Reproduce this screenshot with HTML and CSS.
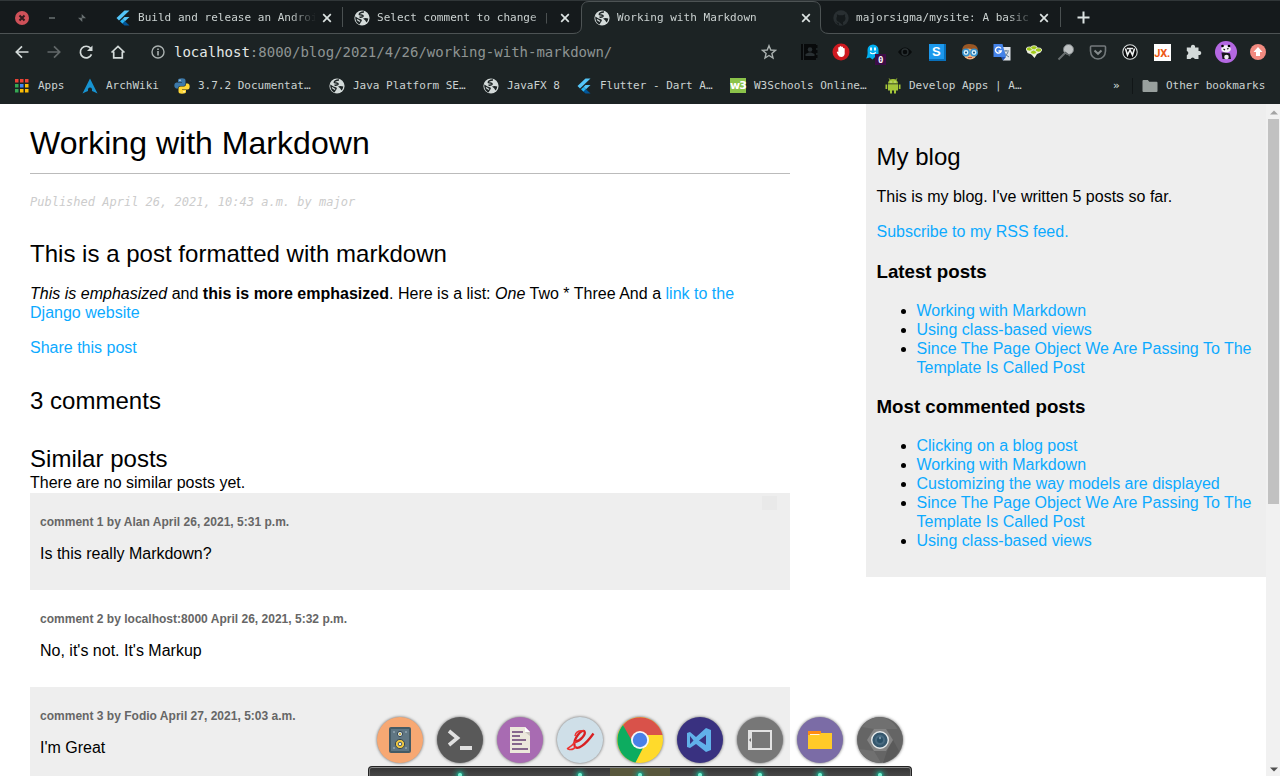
FILE: index.html
```html
<!DOCTYPE html>
<html lang="en">
<head>
<meta charset="utf-8">
<title>Working with Markdown</title>
<link rel="stylesheet" href="styles.css">
</head>
<body>
<svg class="defs" width="0" height="0">
  <defs>
    <symbol id="globe" viewBox="0 0 16 16"><circle cx="8" cy="8" r="7.6" fill="#d3dad9"/><path d="M10 2C7.500 1.800 4.500 3.500 5.500 4.700C7 5.500 9.500 4.500 9 6.300C8.500 7.300 6.500 7 5.500 7.300" fill="none" stroke="#1c2324" stroke-width="1.500"/><path d="M1.300 6.500L4.500 8.500L7.500 9.500Q8.500 10.500 7 12L5.500 14.500C3 13.500 1 10.500 1.300 6.500Z" fill="#1c2324"/><path d="M9 8.500Q11.500 7.500 14.300 8.500Q14 11 12.500 12.500Q11.500 10 9 8.500Z" fill="#1c2324"/><path d="M3 9.500L6 11.500" stroke="#d3dad9" stroke-width="1.300"/></symbol>
    <symbol id="flutter" viewBox="0 0 16 16"><path d="M9.500 .5H14.500L4 10.500L1.500 8Z" fill="#54c5f8"/><path d="M9.500 7H14.500L10 11.300L7.500 8.900Z" fill="#54c5f8"/><path d="M5 11.300L7.500 8.900L10 11.300L7.500 13.700Z" fill="#29b6f6"/><path d="M7.500 13.700L10 11.300L14.500 15.500H9.500Z" fill="#01579b"/></symbol>
    <symbol id="close" viewBox="0 0 10 10"><path d="M1.200 1.200L8.800 8.800M8.800 1.200L1.200 8.800" stroke="#dce3e2" stroke-width="1.700"/></symbol>
  </defs>
</svg>
<div class="screen">
  <header class="browser">
    <div class="tabstrip">
      <div class="window-buttons">
        <svg width="14" height="14" viewBox="0 0 14 14"><circle cx="7" cy="7" r="7" fill="#cf5159"/><path d="M4.500 4.500L9.500 9.500M9.500 4.500L4.500 9.500" stroke="#301a1d" stroke-width="2"/></svg>
        <svg width="14" height="14" viewBox="0 0 14 14"><path d="M4 7H10" stroke="#535a5b" stroke-width="2"/></svg>
        <svg width="14" height="14" viewBox="0 0 14 14"><path d="M6.700 3V7.300H11ZM3 6.700H7.300V11Z" fill="#697071"/></svg>
      </div>
      <div class="tab tab-first"><svg class="favicon"><use href="#flutter"/></svg><span class="tab-title">Build and release an Android app</span><svg class="tab-close"><use href="#close"/></svg></div>
      <div class="tab"><svg class="favicon"><use href="#globe"/></svg><span class="tab-title">Select comment to change | Django</span><svg class="tab-close"><use href="#close"/></svg></div>
      <div class="tab tab-active"><svg class="tab-outline" width="257" height="33" viewBox="0 0 257 33"><path d="M0 33V32.500Q8.500 32.500 8.500 25V8Q8.500 .5 16 .5H240Q247.500 .5 247.500 8V25Q247.500 32.500 256 32.500V33Z" fill="#1c2324"/><path d="M0 32.500Q8.500 32.500 8.500 25V8Q8.500 .5 16 .5H240Q247.500 .5 247.500 8V25Q247.500 32.500 256 32.500" fill="none" stroke="#4d5354"/></svg><svg class="favicon"><use href="#globe"/></svg><span class="tab-title">Working with Markdown</span><svg class="tab-close"><use href="#close"/></svg></div>
      <div class="tab tab-last"><svg class="favicon" viewBox="0 0 16 16"><circle cx="8" cy="8" r="7.700" fill="#292f32"/><path d="M5.800 15.500V12.800C3.500 13 3.500 11.500 2.500 11.200M6 12C3.500 11.500 3.300 9.800 3.500 7.800L4 6.500L3.900 4.300L6 5.200H10L12.100 4.300L12 6.500C13.200 9 12 11.500 10 12L10.200 15.500Z" fill="#151a1c"/></svg><span class="tab-title">majorsigma/mysite: A basic blog</span><svg class="tab-close"><use href="#close"/></svg></div>
      <svg class="new-tab" width="13" height="13" viewBox="0 0 13 13"><path d="M6.500 .5V12.500M.5 6.500H12.500" stroke="#dce3e2" stroke-width="2"/></svg>
    </div>
    <div class="toolbar">
      <div class="nav">
        <svg viewBox="0 0 16 16"><path d="M14.500 8H2.500M8 2.300L2.300 8L8 13.700" class="line bright"/></svg>
        <svg viewBox="0 0 16 16"><path d="M1.500 8H13.500M8 2.300L13.700 8L8 13.700" class="line dim"/></svg>
        <svg viewBox="0 0 16 16"><path d="M13.500 10.300A5.800 5.800 0 1 1 12.600 4.300" class="line bright"/><path d="M14.500 1.500V7H9Z" fill="#d3dad9"/></svg>
        <svg viewBox="0 0 16 16"><path d="M1.500 8.500L8 2.300L14.500 8.500M3.700 7.500V13.800H12.300V7.500" class="line bright"/></svg>
      </div>
      <div class="address">
        <svg width="14" height="14" viewBox="0 0 14 14"><circle cx="7" cy="7" r="6" fill="none" stroke="#aab1b0" stroke-width="1.400"/><path d="M7 6V10.500M7 3.400V5" stroke="#aab1b0" stroke-width="1.600"/></svg>
        <span class="url"><b>localhost</b>:8000/blog/2021/4/26/working-with-markdown/</span>
        <svg class="star" width="16" height="16" viewBox="0 0 16 16"><path d="M8 1.700L9.800 6L14.400 6.400L10.900 9.400L12 14L8 11.500L4 14L5.100 9.400L1.600 6.400L6.200 6Z" fill="none" stroke="#aab1b0" stroke-width="1.400"/></svg>
      </div>
      <div class="extensions">
        <svg viewBox="0 0 18 18"><path d="M1 1H16V17H1Z" fill="#080a0b"/><path d="M3.500 1V17" stroke="#24292b"/><circle cx="10" cy="6.500" r="2.300" fill="#293033"/><path d="M5.500 13V11L9 9.500H11L14.500 11V13Z" fill="#293033"/><path d="M16 2h1.500v3H16zM16 7h1.500v3H16zM16 12h1.500v3H16z" fill="#080a0b"/></svg>
        <svg viewBox="0 0 18 18"><circle cx="9" cy="9" r="8.500" fill="#cf1920"/><path d="M4.700 9L5.700 8.400L6.300 9.300V4.500Q7.100 3.500 7.700 4.500V3.500Q8.600 2.500 9.300 3.500V4Q10.200 3.100 11 4.200V5.200Q12 4.500 12.700 5.500V11Q12 14 9.300 14Q7 14 6 12Z" fill="#fff"/></svg>
        <div class="ghost"><svg viewBox="0 0 18 18"><path d="M3.500 7A5.500 5.500 0 0 1 14.500 7V15L11 14L8.500 16.500L6 14.500L2 15.500Q4 13 3.500 7Z" fill="#00aef0"/><path d="M7 4.500V7.500M11 4.500V7.500" stroke="#fff" stroke-width="1.800"/><path d="M6 9.500Q8.500 12 12 9.500" fill="none" stroke="#fff" stroke-width="1.100"/></svg><span class="ghost-count">0</span></div>
        <svg viewBox="0 0 18 18"><path d="M2 9Q9 0 16 9Q9 18 2 9Z" fill="#080b0c"/><circle cx="9" cy="9" r="3" fill="none" stroke="#293032" stroke-width="1.400"/></svg>
        <div class="letter-tile">S</div>
        <svg viewBox="0 0 18 18"><circle cx="9" cy="9.500" r="7" fill="#f0b47d"/><path d="M1.500 10C0 2 5 1 9 1Q17 1 17 8L16.500 11L14 6.500L7 5.500L4 7Z" fill="#9a5724"/><g fill="#d8f1fc" stroke="#3493d0" stroke-width="1.500"><circle cx="5" cy="9.500" r="3.200"/><circle cx="13" cy="9.500" r="3.200"/></g><circle cx="5" cy="9.500" r="1" fill="#144e78"/><circle cx="13" cy="9.500" r="1" fill="#144e78"/><path d="M7 14.500H11" stroke="#b64b3d"/></svg>
        <svg viewBox="0 0 18 18"><path d="M7 4H17.500V17.500H10Z" fill="#e0e5eb"/><path d="M10 8H16M13 7V8M11 9Q12 12 16 14M15 9Q14 12 11 14" fill="none" stroke="#617b91"/><path d="M.5 1H9.500L13 14H.5Z" fill="#4483e9"/><path d="M8 14H13L10 17.500Z" fill="#2455b5"/><path d="M8 5.500A3 3 0 1 0 8.300 8H5.500" fill="none" stroke="#fff" stroke-width="1.300"/></svg>
        <svg viewBox="0 0 18 18"><path d="M1 6L5 8L9 8L16.500 6L15.500 9.500L12 11L9.500 15L6.500 11.500L2.500 10Z" fill="#eef1df"/><g fill="#a1cb18" stroke="#f3f4e8" stroke-width=".8"><ellipse cx="4.500" cy="6" rx="3.200" ry="2.100"/><ellipse cx="9" cy="4.700" rx="3.200" ry="2"/><ellipse cx="13.500" cy="7" rx="3.200" ry="2.100"/><ellipse cx="8.500" cy="9.300" rx="3" ry="2"/></g></svg>
        <svg viewBox="0 0 18 18"><path d="M1.500 16.500L8 10" stroke="#686e70" stroke-width="2"/><circle cx="11.500" cy="6.500" r="5" fill="#bfc3c4" stroke="#777d7f"/><path d="M8 9L13 13" stroke="#596062" stroke-width="1.500"/></svg>
        <svg viewBox="0 0 18 18"><path d="M2.500 3H15.500Q16.500 3 16.500 4V8Q16 15.500 9 16Q2 15.500 1.500 8V4Q1.500 3 2.500 3Z" fill="none" stroke="#747a7c" stroke-width="1.600"/><path d="M5.500 7.500L9 10.800L12.500 7.500" fill="none" stroke="#858b8c" stroke-width="2"/></svg>
        <svg viewBox="0 0 18 18"><circle cx="9" cy="9" r="7.200" fill="#080a0b" stroke="#d8dddd" stroke-width="1.100"/><path d="M4.500 5.500L6.500 12L9 7L11.500 12L13.500 5.500M6 5.500H12" fill="none" stroke="#f0f3f3" stroke-width="1.600"/></svg>
        <div class="jx">JX.</div>
        <svg viewBox="0 0 18 18"><path d="M1.800 4.500H6A2.100 2.100 0 1 1 10 4.500H13.500V8A2.100 2.100 0 1 1 13.500 12V16H9.800A2.200 2.200 0 0 0 5.600 16H1.800V12.200A2.200 2.200 0 0 0 1.800 8Z" fill="#d3dad9"/></svg>
        <svg class="avatar" viewBox="0 0 22 22"><circle cx="11" cy="11" r="11" fill="#b468e2"/><ellipse cx="11" cy="8" rx="4.800" ry="3.700" fill="#f5f2f7"/><circle cx="7.500" cy="5" r="1.300"/><circle cx="14" cy="5" r="1.300"/><path d="M8.500 8L10 9M12 8L13.500 7.500" stroke="#111" stroke-width="1.300"/><path d="M6.500 11.500Q11 11 15 12.500L16 18H7.500Z" fill="#17151a"/><circle cx="11.500" cy="16" r="2.300" fill="#eee"/></svg>
        <svg viewBox="0 0 18 18"><circle cx="9" cy="9" r="8" fill="#f18a80"/><path d="M9 4L13.500 9H11V13H7V9H4.500Z" fill="#fff"/></svg>
      </div>
    </div>
    <nav class="bookmarks">
      <div class="bookmark-list">
        <span class="bookmark"><svg viewBox="0 0 16 16"><path d="M1 1H4.500V4.500H1ZM6 1H9.500V4.500H6ZM11 1H14.500V4.500H11Z" fill="#ea4335"/><path d="M1 6H4.500V9.500H1ZM1 11H4.500V14.500H1Z" fill="#34a853"/><path d="M6 6H9.500V9.500H6Z" fill="#4285f4"/><path d="M11 6H14.500V9.500H11ZM6 11H9.500V14.500H6ZM11 11H14.500V14.500H11Z" fill="#fbbc05"/></svg>Apps</span>
        <span class="bookmark"><svg viewBox="0 0 16 16"><path d="M8 .5L15.500 15.500Q12 13.500 10 13Q10.500 9.500 8 9.500Q5.500 9.500 6 13Q4 13.500 .5 15.500Z" fill="#1793d1"/></svg>ArchWiki</span>
        <span class="bookmark"><svg viewBox="0 0 16 16"><path d="M4 4V2Q4 .3 8 .3Q11.500 .3 11.500 2.500V6Q11.500 8 9.500 8H6Q4 8 4 10.500H2Q0 10 .3 7Q.5 4.500 2.500 4.500H8V4Z" fill="#3c78a9"/><path d="M12 12V14Q12 15.700 8 15.700Q4.500 15.700 4.500 13.500V10.500Q4.500 8.500 6.500 8.500H10Q12 8.500 12 5.500H14Q16 6 15.700 9Q15.500 11.500 13.500 11.500H8V12Z" fill="#ffd738"/><circle cx="6" cy="2.300" r=".7" fill="#fff"/><circle cx="10" cy="13.700" r=".7" fill="#fff"/></svg>3.7.2 Documentat…</span>
        <span class="bookmark"><svg><use href="#globe"/></svg>Java Platform SE…</span>
        <span class="bookmark"><svg><use href="#globe"/></svg>JavaFX 8</span>
        <span class="bookmark"><svg><use href="#flutter"/></svg>Flutter - Dart A…</span>
        <span class="bookmark"><span class="w3">w3</span>W3Schools Online…</span>
        <span class="bookmark"><svg viewBox="0 0 16 16"><path d="M3 5.500A5 4.500 0 0 1 13 5.500ZM3 6.300H13V12.500H11V15.500H9V12.500H7V15.500H5V12.500H3ZM.5 6.500H2.200V11H.5ZM13.800 6.500H15.500V11H13.800Z" fill="#a4c639"/><path d="M5.500 2.500L4.200 .5M10.500 2.500L11.800 .5" stroke="#a4c639"/><path d="M5.500 3.500H6.500V4.500H5.500ZM9.500 3.500H10.500V4.500H9.500Z" fill="#eef5df"/></svg>Develop Apps | A…</span>
      </div>
      <span class="more">»</span>
      <span class="bookmark other"><svg viewBox="0 0 16 16"><path d="M.5 3Q.5 2 1.500 2H5.800L7.300 3.700H14.500Q15.500 3.700 15.500 4.700V13Q15.500 14 14.500 14H1.500Q.5 14 .5 13Z" fill="#98a09e"/></svg>Other bookmarks</span>
    </nav>
  </header>

  <div class="viewport">
    <main class="content">
      <h1>Working with Markdown</h1>
      <p class="date">Published April 26, 2021, 10:43 a.m. by major</p>
      <h2>This is a post formatted with markdown</h2>
      <p class="body"><em>This is emphasized</em> and <strong>this is more emphasized</strong>. Here is a list: <em>One</em> Two * Three And a <a href="#">link to the Django website</a></p>
      <p><a href="#">Share this post</a></p>
      <h2 class="count">3 comments</h2>
      <h2 class="similar">Similar posts</h2>
      <div class="none">There are no similar posts yet.</div>
      <article class="comment shaded"><p class="info">comment 1 by Alan April 26, 2021, 5:31 p.m.</p><p>Is this really Markdown?</p><span class="smudge"></span></article>
      <article class="comment"><p class="info">comment 2 by localhost:8000 April 26, 2021, 5:32 p.m.</p><p>No, it's not. It's Markup</p></article>
      <article class="comment shaded"><p class="info">comment 3 by Fodio April 27, 2021, 5:03 a.m.</p><p>I'm Great</p></article>
    </main>
    <aside class="sidebar">
      <h2>My blog</h2>
      <p>This is my blog. I've written 5 posts so far.</p>
      <p><a href="#">Subscribe to my RSS feed.</a></p>
      <h3>Latest posts</h3>
      <ul>
        <li><a href="#">Working with Markdown</a></li>
        <li><a href="#">Using class-based views</a></li>
        <li><a href="#">Since The Page Object We Are Passing To The Template Is Called Post</a></li>
      </ul>
      <h3 class="most">Most commented posts</h3>
      <ul>
        <li><a href="#">Clicking on a blog post</a></li>
        <li><a href="#">Working with Markdown</a></li>
        <li><a href="#">Customizing the way models are displayed</a></li>
        <li><a href="#">Since The Page Object We Are Passing To The Template Is Called Post</a></li>
        <li><a href="#">Using class-based views</a></li>
      </ul>
    </aside>
    <div class="scrollbar">
      <svg width="8" height="5" viewBox="0 0 8 5"><path d="M0 4.500L4 .5L8 4.500Z" fill="#a3a3a3"/></svg>
      <div class="thumb"></div>
      <svg class="down" width="8" height="5" viewBox="0 0 8 5"><path d="M0 .5H8L4 4.500Z" fill="#505050"/></svg>
    </div>
  </div>

  <div class="dock">
    <div class="dock-icons">
      <svg viewBox="0 0 48 48"><circle cx="24" cy="24" r="23" fill="#f7a873"/><rect x="13" y="11" width="22" height="26" rx="2" fill="#455a64"/><rect x="15" y="13" width="18" height="22" fill="#607683"/><circle cx="24" cy="18" r="2.600" fill="#dce5e9" stroke="#354650"/><circle cx="24" cy="18" r="1.200" fill="#d6b74c"/><circle cx="24" cy="28" r="4.600" fill="#f2c83f" stroke="#354650"/><circle cx="24" cy="28" r="1.800" fill="#e7eef0" stroke="#455a64"/><g fill="#92a6b0"><circle cx="18" cy="16" r="1"/><circle cx="30" cy="16" r="1"/><circle cx="18" cy="32" r="1"/><circle cx="30" cy="32" r="1"/></g></svg>
      <svg viewBox="0 0 48 48"><circle cx="24" cy="24" r="23" fill="#595959"/><path d="M13 15L21.500 22L13 29" fill="none" stroke="#e0e0e0" stroke-width="3.600"/><path d="M24 32H36" stroke="#e0e0e0" stroke-width="4"/></svg>
      <svg viewBox="0 0 48 48"><circle cx="24" cy="24" r="23" fill="#a86bb2"/><path d="M14 11H29L34 16V37H14Z" fill="#ece8dc"/><path d="M29 11V16H34Z" fill="#fff"/><path d="M29 16H34V20Z" fill="#c9c2bd"/><path d="M16 16H27M16 20H24M16 24H30M16 28H26M16 33H32" stroke="#86688c" stroke-width="2"/></svg>
      <svg viewBox="0 0 48 48"><circle cx="24" cy="24" r="23" fill="#cfdfe8"/><path d="M19 26C25 25 30 18 28.500 15.500C26 12 17 23 18.500 29.500C20.500 36 30 28 37.500 17.500" fill="none" stroke="#d82022" stroke-width="2.300"/><path d="M19 20Q20 14 28 15M11 33Q16 30 20 25M12 33Q17 35 20 30" fill="none" stroke="#ee3431" stroke-width="1.500"/></svg>
      <svg viewBox="0 0 48 48"><circle cx="24" cy="24" r="23" fill="#ffda2b"/><path d="M7 9A23 23 0 0 1 46.500 19H24L15 29Z" fill="#d9524a"/><path d="M7 9A23 23 0 0 0 19.500 46.500L27 32L17 27Z" fill="#0dac60"/><circle cx="24" cy="24" r="9" fill="#f7f7fa"/><circle cx="24" cy="24" r="7.200" fill="#4a80e8"/></svg>
      <svg viewBox="0 0 48 48"><circle cx="24" cy="24" r="23" fill="#393180"/><path fill-rule="evenodd" d="M11 17L14 16L20 21L30 12L35 14V34L30 36L20 28L14 32L11 31ZM14 20V28L17.500 24.500ZM30 19L23 24.500L30 29Z" fill="#61b1ea"/></svg>
      <svg viewBox="0 0 48 48"><circle cx="24" cy="24" r="23" fill="#777"/><path fill-rule="evenodd" d="M12 14H36V34H12ZM16 16V32H34V16Z" fill="#e2e2e2"/><path d="M15 22V26L13 24Z" fill="#666"/></svg>
      <svg viewBox="0 0 48 48"><circle cx="24" cy="24" r="23" fill="#7b6ca6"/><path d="M12 15H25V21H12Z" fill="#ff8c12"/><path d="M14 18H24V21H14Z" fill="#fff7df"/><path d="M12 19H23L25 17H36V33H12Z" fill="#ffca28"/></svg>
      <svg viewBox="0 0 48 48"><circle cx="24" cy="24" r="23" fill="#656565"/><path d="M24 1A23 23 0 0 0 6 11L18 13H41.500A23 23 0 0 0 24 1ZM3 33L18 35L25 47Q9 46 3 33Z" fill="#707070"/><path d="M37 24L43 35Q37 45 27 47L31 35Z" fill="#5a5a5a"/><path d="M18 13H30L37 24L30 35H18L11 24Z" fill="#858585"/><circle cx="24" cy="24" r="8.300" fill="#36586e" stroke="#e7ebec" stroke-width="1.400"/><circle cx="24" cy="24" r="5" fill="#496b82"/><circle cx="24" cy="24" r="3" fill="#294f66"/><circle cx="24" cy="22" r="1.200" fill="#7795a8"/></svg>
    </div>
    <div class="shelf"><span></span><span class="lit"></span><span></span><span class="lit"></span><span class="lit current"></span><span class="lit"></span><span class="lit"></span><span class="lit"></span><span class="lit"></span></div>
  </div>
</div>
</body>
</html>
```
FILE: styles.css
```css
* { box-sizing: border-box; }
body { margin: 0; background: #fff; font: 16px/19px "Liberation Sans", Arial, sans-serif; color: #000; }
.defs { position: absolute; }
svg { display: block; flex: none; }
.screen { position: relative; width: 1280px; height: 776px; overflow: hidden; display: flex; flex-direction: column; }
.browser { height: 104px; flex: none; background: #1c2324; color: #cbd2d1; font: 11px/16px "DejaVu Sans Mono", monospace; white-space: nowrap; }
.tabstrip { height: 34px; display: flex; align-items: center; background: #151a1c; border-top: 1px solid #303638; box-shadow: inset 0 -1px #4d5354; }
.window-buttons { width: 104px; padding-left: 15px; display: flex; gap: 16px; }
.tab { width: 240px; height: 33px; padding: 0 11px; display: flex; align-items: center; }
.tab-first, .tab-last { background: linear-gradient(#4a5051, #4a5051) right 6px / 1px 20px no-repeat; }
.tab-first { width: 239px; padding-left: 11px; }
.favicon { width: 16px; height: 16px; margin-right: 7px; }
.tab-title { width: 178px; overflow: hidden; letter-spacing: .030px; -webkit-mask-image: linear-gradient(90deg, #000 152px, transparent 178px); mask-image: linear-gradient(90deg, #000 152px, transparent 178px); }
.tab-close { width: 10px; height: 10px; margin-left: 5px; }
.tab-first .tab-close, .tab-active .tab-close { margin-left: 6px; }
.tab-active { position: relative; z-index: 0; width: 239px; }
.tab-outline { position: absolute; left: -10px; top: 0; z-index: -1; }
.tab-last { width: 239px; }
.new-tab { margin-left: 16px; }
.toolbar { height: 36px; display: flex; align-items: center; }
.nav { display: flex; gap: 16px; padding-left: 14px; }
.nav svg { width: 16px; height: 16px; }
.line { fill: none; stroke-width: 1.700; }
.bright { stroke: #d3dad9; }
.dim { stroke: #626869; }
.address { display: flex; align-items: center; width: 667px; padding-left: 25px; }
.url { margin-left: 9px; font-size: 14px; color: #8e9493; }
.url b { font-weight: 400; color: #e3e8e7; }
.star { margin-left: auto; margin-right: 16px; }
.extensions { display: grid; grid-template-columns: repeat(15, 32.100px); justify-items: center; align-items: center; }
.extensions svg { width: 18px; height: 18px; }
.extensions .avatar { width: 22px; height: 22px; }
.ghost { position: relative; }
.ghost-count { position: absolute; left: 11px; top: 11px; width: 11px; height: 11px; background: #3c0c47; color: #fff; font: bold 9px/12px "DejaVu Sans Mono", monospace; text-align: center; }
.letter-tile { width: 17px; height: 17px; background: #1c98ec; color: #fff; font: bold 13px/15px "Liberation Sans", sans-serif; padding-left: 3px; box-shadow: inset -2px -2px #0870bb; }
.jx { width: 17px; height: 17px; background: #fff; color: #ed5913; font: bold 11px/19px Roboto, sans-serif; letter-spacing: -.3px; text-align: center; }
.bookmarks { height: 34px; display: flex; align-items: center; padding-bottom: 3px; padding-left: 14px; }
.bookmark-list { display: grid; grid-template-columns: 68px 92px 155px 154px 93px 154px 155px 228px; }
.bookmark { display: flex; align-items: center; }
.bookmark svg { width: 16px; height: 16px; margin-right: 8px; }
.w3 { width: 16px; height: 15px; margin-right: 8px; background: #8bc34a; color: #fff; font: bold 11px/15px "DejaVu Sans", sans-serif; letter-spacing: -1px; }
.more { width: 19px; color: #dce3e2; }
.other { padding-left: 9px; border-left: 1px solid #111617; }
.viewport { flex: 1; display: flex; align-items: flex-start; min-height: 0; overflow: hidden; }
a { color: #0caaff; text-decoration: none; }
p { margin: 16px 0; }
h1, h2 { font-weight: 400; }
.content { width: 760px; margin-left: 30px; padding-top: 21px; }
h1 { margin: 0; font-size: 32px; line-height: 36px; height: 49px; border-bottom: 1px solid #bbb; letter-spacing: .030px; }
h2 { margin: 0; font-size: 24px; line-height: 27px; letter-spacing: .020px; }
.date { margin: 21px 0 30px; color: #ccc; font: italic 12px/15px "DejaVu Sans Mono", monospace; }
.content h2 + p { margin-top: 17px; }
.body { padding-right: 10px; letter-spacing: .013px; }
.count { margin-top: 30px; }
.similar { margin-top: 31px; }
.none { height: 21px; padding-top: 1px; }
.comment { position: relative; height: 97px; padding: 22px 10px 0; }
.shaded { background: #eee; }
.comment .info { margin: 0 0 15px; font-size: 12px; line-height: 14px; font-weight: 700; color: #666; letter-spacing: .015px; }
.comment p { margin: 0; }
.smudge { position: absolute; right: 13px; top: 3px; width: 15px; height: 14px; background: #e9e9e9; }
.sidebar { width: 400px; height: 473px; margin-left: 76px; padding: 39px 9px 0 10.500px; background: #eee; }
.sidebar h2 { margin-bottom: 17px; }
h3 { margin: 20px 0 19px; font-size: 18.720px; line-height: 21px; }
.most { margin-top: 19px; }
ul { margin: 0; padding-left: 40px; }
.scrollbar { width: 14px; height: 672px; background: #f1f1f1; display: flex; flex-direction: column; align-items: center; padding: 6px 0 4px 1px; }
.thumb { width: 11px; height: 385px; margin-top: 4px; background: #c1c1c1; }
.down { margin-top: auto; }
.dock { position: absolute; left: 368px; top: 716px; width: 544px; }
.dock-icons { display: flex; gap: 12px; padding: 0 8px; }
.dock-icons svg { width: 48px; height: 48px; filter: drop-shadow(0 0 1.500px rgba(0, 0, 0, .6)); }
.shelf { height: 14px; margin-top: 2px; display: flex; border: 1px solid #222; border-bottom: 0; border-radius: 4px 4px 0 0; background: linear-gradient(#333, #505050); box-shadow: inset 0 1px #888, inset 1px 0 #777, inset -1px 0 #777; padding: 1px 1px 0; }
.shelf span { width: 60px; height: 12px; }
.lit { background: radial-gradient(circle at 30px 7px, #79f2d2 0 1.500px, #258a77 2.500px, rgba(40, 150, 125, .25) 5px, transparent 9px); }
.current { background-color: #58573c; }
```
